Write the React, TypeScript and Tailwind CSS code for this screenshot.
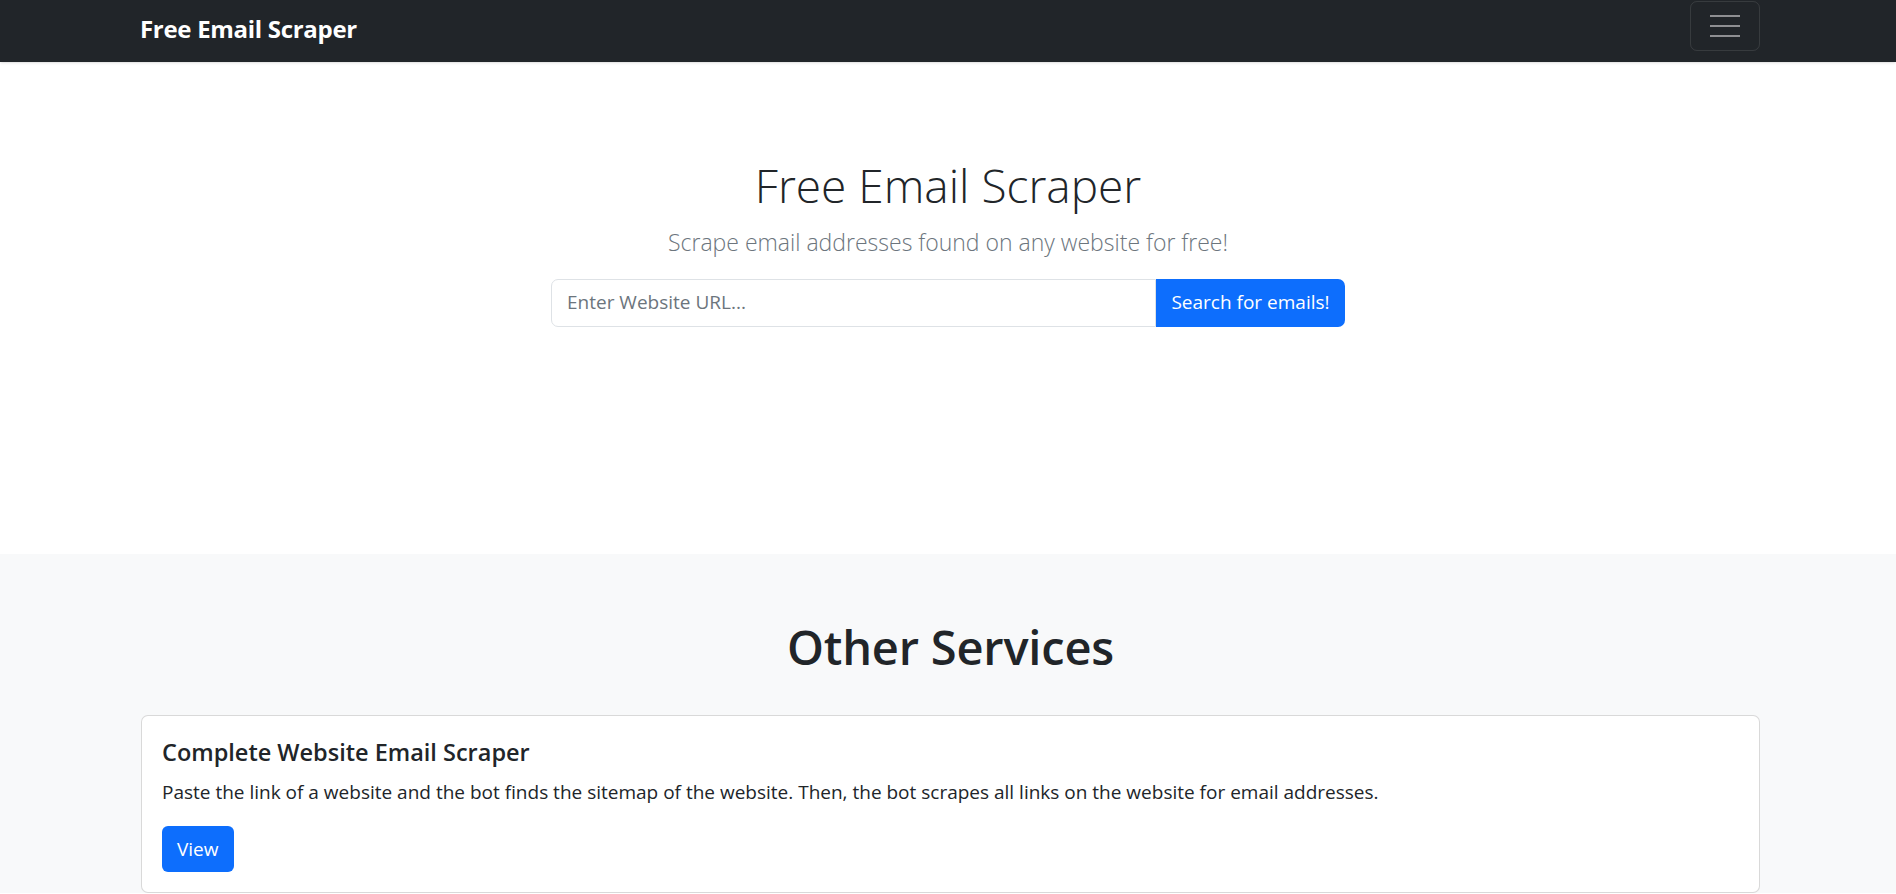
export default function App() {
  return (
    <div className="min-h-screen bg-white text-[#212529] font-['Open_Sans','Noto_Sans',sans-serif]">
      {/* Top navbar */}
      <nav className="bg-[#212529] h-[62px] shadow-sm">
        <div className="h-full pl-[140px] pr-[136px] pb-[10px] flex items-center justify-between">
          <a href="#" className="mt-[6px] text-[24px] font-bold text-white leading-none tracking-[-0.3px]">
            Free Email Scraper
          </a>
          <button
            type="button"
            className="w-[70px] h-[50px] rounded-[7px] border border-white/10 flex flex-col items-center justify-center gap-[8px]"
          >
            <span className="block w-[30px] h-[2px] bg-[#8e8f92]" />
            <span className="block w-[30px] h-[2px] bg-[#8e8f92]" />
            <span className="block w-[30px] h-[2px] bg-[#8e8f92]" />
          </button>
        </div>
      </nav>

      {/* Hero */}
      <section className="h-[492px] flex flex-col items-center pt-[96px]">
        <h1 className="text-[46px] font-light leading-[1.2] text-[#212529]">Free Email Scraper</h1>
        <p className="mt-[12px] text-[23px] font-light text-[#6c757d] leading-[1.5]">
          Scrape email addresses found on any website for free!
        </p>
        <div className="mt-[19px] flex w-[794px] h-[48px]">
          <input
            type="text"
            placeholder="Enter Website URL..."
            className="flex-1 min-w-0 px-[15px] text-[19px] border border-[#dee2e6] rounded-l-[7px] outline-none placeholder:text-[#6c757d]"
          />
          <button className="w-[189px] bg-[#0d6efd] text-white text-[19px] rounded-r-[7px]">
            Search for emails!
          </button>
        </div>
      </section>

      {/* Other services */}
      <section className="bg-[#f8f9fa] pt-[65px] pl-[141px] pr-[136px]">
        <h2 className="text-center text-[47px] font-semibold leading-[1.2] text-[#212529] tracking-[-0.2px]">Other Services</h2>
        <div className="mt-[40px] bg-white border border-black/[0.15] rounded-[7px] pt-[22px] px-[20px] pb-[20px]">
          <h5 className="text-[23.5px] font-semibold leading-[1.2]">Complete Website Email Scraper</h5>
          <p className="mt-[11px] text-[19px] leading-[1.5]">
            Paste the link of a website and the bot finds the sitemap of the website. Then, the bot scrapes all links on the website for email addresses.
          </p>
          <button className="mt-[20px] h-[46px] px-[15px] bg-[#0d6efd] text-white text-[19px] rounded-[6px]">
            View
          </button>
        </div>
      </section>
    </div>
  );
}
